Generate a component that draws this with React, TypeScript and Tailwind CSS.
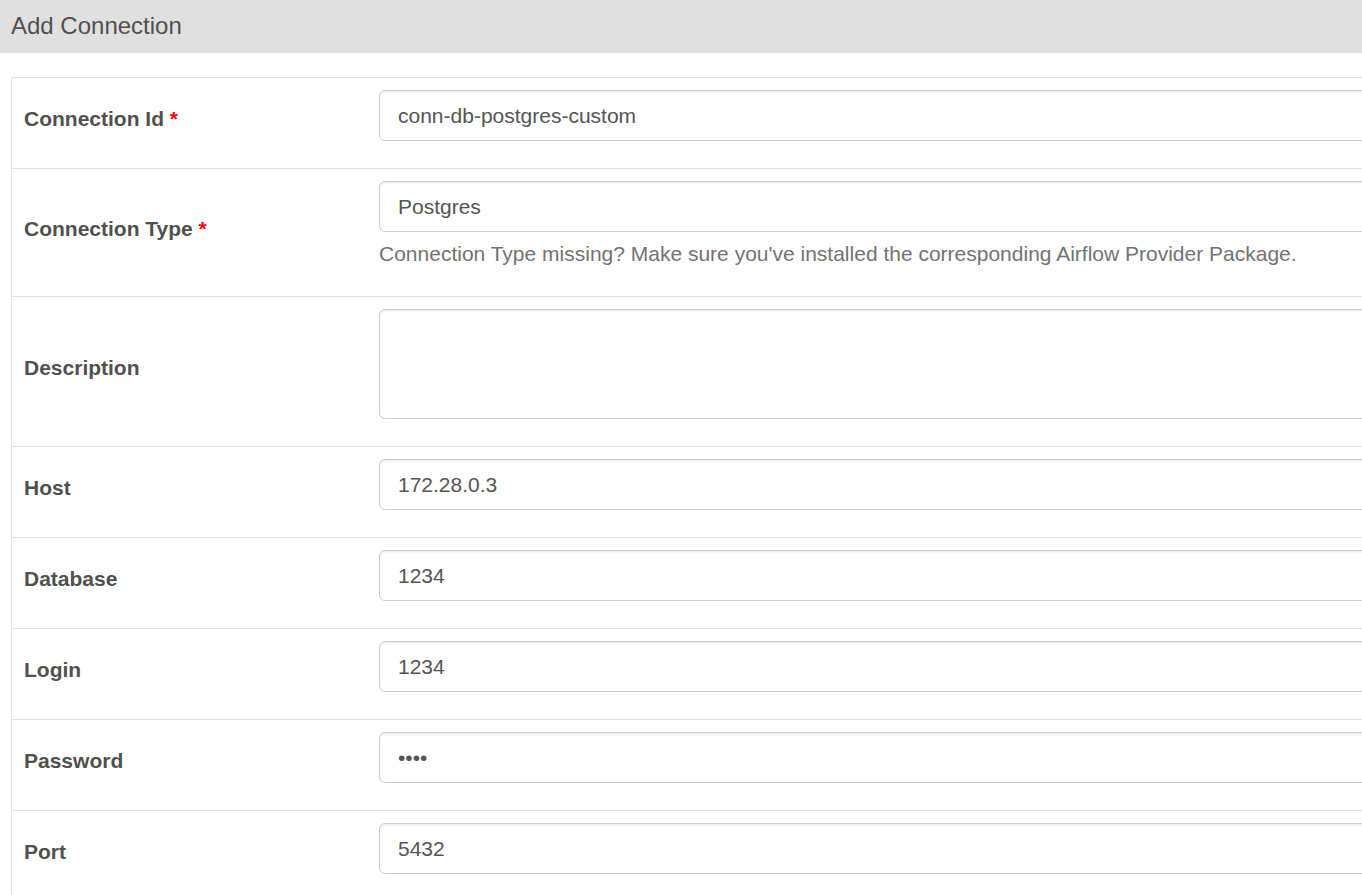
import React from 'react';

const FONT = { fontFamily: '"Liberation Sans", Arial, Helvetica, sans-serif' };

type Field = {
  label: string;
  value?: string;
  required?: boolean;
  kind?: 'text' | 'password' | 'textarea';
  help?: string;
};

const FIELDS: Field[] = [
  { label: 'Connection Id', value: 'conn-db-postgres-custom', required: true },
  {
    label: 'Connection Type',
    value: 'Postgres',
    required: true,
    help: "Connection Type missing? Make sure you've installed the corresponding Airflow Provider Package.",
  },
  { label: 'Description', kind: 'textarea' },
  { label: 'Host', value: '172.28.0.3' },
  { label: 'Database', value: '1234' },
  { label: 'Login', value: '1234' },
  { label: 'Password', value: '1234', kind: 'password' },
  { label: 'Port', value: '5432' },
];

const inputCls =
  'block w-full rounded-[6px] border border-[#ccc] bg-white px-[18px] text-[21px] leading-[30px] text-[#555] shadow-[inset_0_1.5px_1.5px_rgba(0,0,0,0.075)] outline-none';

function FormRow({ field }: { field: Field }) {
  return (
    <div className="flex border-t border-[#e3e3e3]">
      {/* label cell */}
      <div className="flex w-[355px] shrink-0 items-center p-3">
        <label className="mb-[7.5px] text-[21px] font-bold leading-[30px] text-[#51504f]">
          {field.label}
          {field.required && <span className="text-[#ff0000]"> *</span>}
        </label>
      </div>

      {/* input cell */}
      <div className="flex-1 p-3">
        <div className="mb-[15px]">
          {field.kind === 'textarea' ? (
            <textarea readOnly className={`${inputCls} h-[110px] resize-none py-[9px]`} style={FONT} />
          ) : (
            <input
              readOnly
              type={field.kind === 'password' ? 'password' : 'text'}
              value={field.value}
              className={`${inputCls} h-[51px] py-[9px]`}
              style={FONT}
            />
          )}
          {field.help && (
            <p className="mt-[7px] text-[21px] leading-[30px] text-[#737373]">{field.help}</p>
          )}
        </div>
      </div>
    </div>
  );
}

export default function App() {
  return (
    <div className="h-[895px] w-[1362px] overflow-hidden bg-white" style={FONT}>
      {/* Page heading */}
      <div className="flex h-[53px] items-center bg-[#e0e0e0] px-[11px] pb-[2px]">
        <h4 className="text-[24px] leading-[30px] text-[#51504f]">Add Connection</h4>
      </div>

      {/* Form table */}
      <div className="mt-[24px] pl-[11px]">
        <div className="w-[1700px] border-l border-[#e3e3e3]">
          {FIELDS.map((f) => (
            <FormRow key={f.label} field={f} />
          ))}
        </div>
      </div>
    </div>
  );
}
